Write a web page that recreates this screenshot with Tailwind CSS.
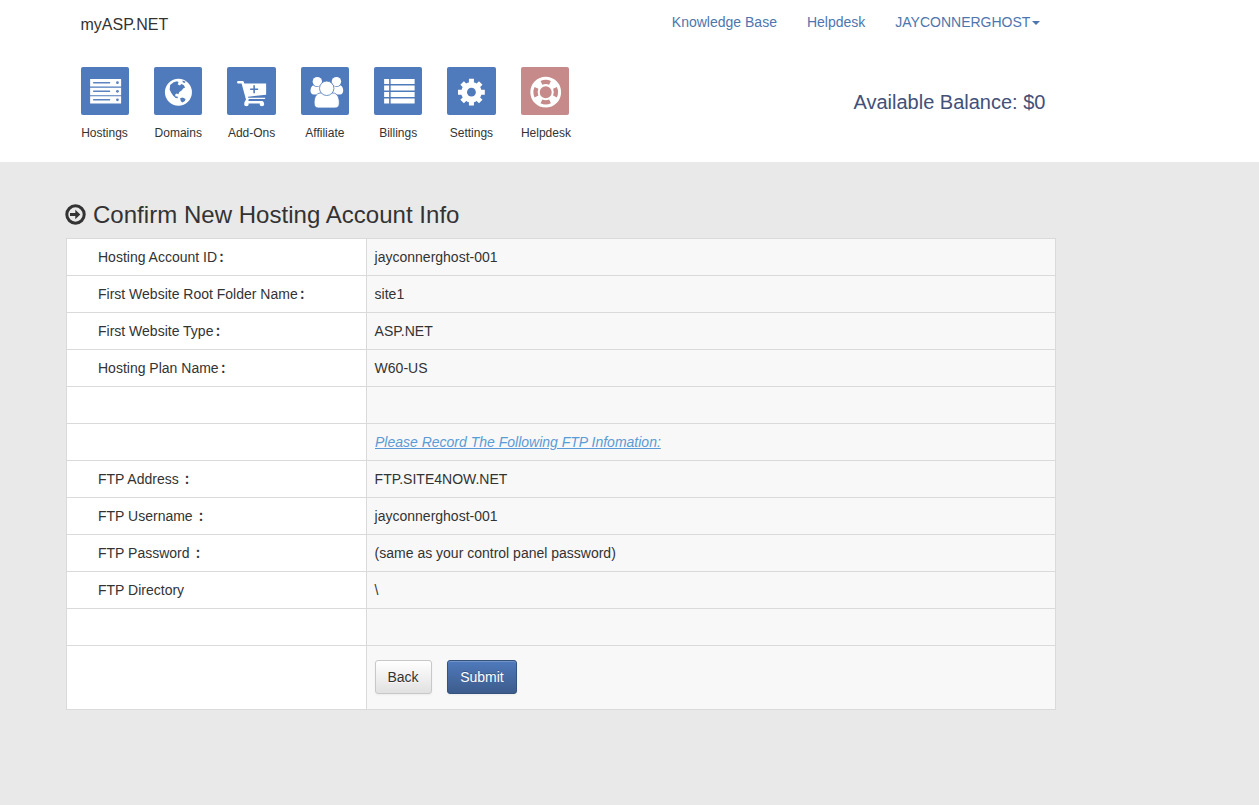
<!DOCTYPE html>
<html lang="en">
<head>
<meta charset="utf-8">
<title>Confirm New Hosting Account Info</title>
<script src="https://cdn.jsdelivr.net/npm/@tailwindcss/browser@4"></script>
</head>
<body class="min-h-screen overflow-hidden bg-[#e9e9e9] font-['Liberation_Sans','Noto_Sans_CJK_SC',sans-serif] text-sm leading-5 text-[#333]">
<header class="h-[162px] bg-white pl-[80.9px]">
  <div class="flex w-[959px] items-start justify-between pt-3">
    <a class="-ml-[0.4px] pt-[3px] text-base leading-5">myASP.NET</a>
    <nav class="flex h-[22px] gap-[30px] text-[#4d76ae]">
      <a>Knowledge Base</a>
      <a>Helpdesk</a>
      <a class="flex h-5 items-center">JAYCONNERGHOST<span class="mt-0.5 ml-[1.5px] h-0 w-0 border-x-4 border-t-4 border-x-transparent border-t-[#4d76ae]"></span></a>
    </nav>
  </div>
  <div class="flex w-[964.6px] items-start justify-between pt-8">
    <ul class="flex gap-[25.04px] text-xs leading-4">
      <li class="flex w-[48.25px] flex-col items-center gap-[10px]">
        <svg class="h-12 w-full shrink-0 rounded-xs bg-[#4f7abc]" viewBox="0 0 48 48"><path fill="#fff" d="M9 12h31v7.500H9zM9 20.700h31v7.500H9zM9 29.200h31v7.300H9z"/><g fill="#5c84c0"><path d="M12 15h17v1.500H12zM12 23.600h17v1.500H12zM12 32.100h17v1.500H12z"/><circle cx="36.300" cy="15.700" r="1.400"/><circle cx="36.300" cy="24.300" r="1.400"/><circle cx="36.300" cy="32.800" r="1.400"/></g></svg>
        <span class="-ml-px">Hostings</span>
      </li>
      <li class="flex w-[48.25px] flex-col items-center gap-[10px]">
        <svg class="h-12 w-full shrink-0 rounded-xs bg-[#4f7abc]" viewBox="0 0 48 48"><circle cx="24.300" cy="25.300" r="13.500" fill="#fff"/><path fill="#4f7abc" d="M16 18l3.500-2.800 3.500-1 1.500 1.300-1 1.700 2.200 1.400 1.500-1.500 2.300 1 1.500 2.300-2 1.200-1.500 2-2.300 1.400-1 2.200-1.800-.7-1.500 1.200.5 1.700 2 .2.300 1.700-2.200-.4-2.600-2.400-2-3-1.400-3 .4-3zM26 31.200l2.500-.8 3 1.500-1 2.400-2.300 1.200-1.500-1.300zM28.500 13.500l3 1.200-1 1.300-2-.8z"/></svg>
        <span>Domains</span>
      </li>
      <li class="flex w-[48.25px] flex-col items-center gap-[10px]">
        <svg class="h-12 w-full shrink-0 rounded-xs bg-[#4f7abc]" viewBox="0 0 48 48"><path d="M11.200 15.300H15.500L20.300 32.800 18.800 35.200H35" fill="none" stroke="#fff" stroke-width="2.600" stroke-linecap="round" stroke-linejoin="round"/><path d="M16 16.500h23v11.200l-19.800 2.200z" fill="#fff"/><path d="M20 30.800h18v1.200H20z" fill="#fff"/><circle cx="19.300" cy="37" r="2.300" fill="#fff"/><circle cx="34.800" cy="37" r="2.300" fill="#fff"/><path d="M27 18.200v8M23 22.200h8" stroke="#4f7abc" stroke-width="1.600"/></svg>
        <span>Add-Ons</span>
      </li>
      <li class="flex w-[48.25px] flex-col items-center gap-[10px]">
        <svg class="h-12 w-full shrink-0 rounded-xs bg-[#4f7abc]" viewBox="0 0 48 48"><g fill="#fff"><circle cx="16.200" cy="14.600" r="4.700"/><circle cx="35.300" cy="14.600" r="4.700"/><path d="M12 18.300c2 2 5 2 7 .8l1 8.400h-7.500C8.300 27.500 8.500 20.500 12 18.300zM39.500 18.300c-2 2-5 2-7 .8l-1 8.400H39c4.200 0 4-7 .5-9.200z"/></g><g fill="#fff" stroke="#4f7abc" stroke-width=".8"><path d="M19.500 26c-5 0-6.500 5.500-6.500 10 0 3.500 1.500 5 4.500 5h16.200c3 0 4.500-1.500 4.500-5 0-4.500-1.500-10-6.500-10z"/><circle cx="25.600" cy="21.300" r="7.200"/></g></svg>
        <span>Affiliate</span>
      </li>
      <li class="flex w-[48.25px] flex-col items-center gap-[10px]">
        <svg class="h-12 w-full shrink-0 rounded-xs bg-[#4f7abc]" viewBox="0 0 48 48"><path fill="#fff" d="M10 12h5v5h-5zM16.500 12h24v5h-24zM10 18.600h5v5h-5zM16.500 18.600h24v5h-24zM10 25.100h5v5h-5zM16.500 25.100h24v5h-24zM10 31.600h5v5h-5zM16.500 31.600h24v5h-24z"/></svg>
        <span>Billings</span>
      </li>
      <li class="flex w-[48.25px] flex-col items-center gap-[10px]">
        <svg class="h-12 w-full shrink-0 rounded-xs bg-[#4f7abc]" viewBox="0 0 48 48"><g transform="translate(24.300 25.200)"><path d="M0-13.400V13.400M-13.400 0H13.400M-9.300-9.300L9.300 9.300M9.300-9.300L-9.300 9.300" stroke="#fff" stroke-width="5"/><circle r="10.300" fill="#fff"/><circle r="4.400" fill="#4f7abc"/></g></svg>
        <span>Settings</span>
      </li>
      <li class="flex w-[48.25px] flex-col items-center gap-[10px]">
        <svg class="h-12 w-full shrink-0 rounded-xs bg-[#c58a89]" viewBox="0 0 48 48"><g transform="translate(24.600 25.200)" fill="none"><circle r="10.700" stroke="#fff" stroke-width="9.400"/><g stroke="#c58a89" stroke-width="4.200"><path d="M-4.300-9.250A10.200 10.200 0 0 1 4.300-9.250M-4.300 9.250A10.200 10.200 0 0 0 4.300 9.250M-9.250-4.300A10.200 10.200 0 0 0-9.250 4.300M9.250-4.300A10.200 10.200 0 0 1 9.250 4.300"/></g></g></svg>
        <span class="ml-[2.4px]">Helpdesk</span>
      </li>
    </ul>
    <div class="pt-[22px] text-xl leading-[26px] text-[#42507a]">Available Balance: $0</div>
  </div>
</header>
<main class="pt-[38px] pl-[66px]">
  <h1 class="flex h-[30px] items-center gap-[7px] text-2xl leading-[30px] tracking-[0.03px]">
    <svg class="-mt-px -ml-px h-[21px] w-[21px]" viewBox="0 0 21 21"><circle cx="10.500" cy="10.500" r="8.700" fill="none" stroke="#333" stroke-width="3"/><path fill="#333" d="M5 9h5.300V5.700l5 4.800-5 4.800V12H5z"/></svg>
    Confirm New Hosting Account Info
  </h1>
  <table class="mt-2 w-[990px] table-fixed border-collapse bg-white [&_i]:ml-[1.5px] [&_i]:text-xs [&_i]:leading-none [&_i]:font-bold [&_i]:not-italic [&_td]:h-[37px] [&_td]:border [&_td]:border-[#dadada] [&_td]:px-[7.6px] [&_td]:py-0 [&_td:first-child]:pl-[31px] [&_td:last-child]:bg-[#f8f8f8]">
    <colgroup><col class="w-[300px]"><col></colgroup>
    <tbody>
    <tr><td><div class="h-5">Hosting Account ID<i>&#xFF1A;</i></div></td><td>jayconnerghost-001</td></tr>
    <tr><td><div class="h-5">First Website Root Folder Name<i>&#xFF1A;</i></div></td><td>site1</td></tr>
    <tr><td><div class="h-5">First Website Type<i>&#xFF1A;</i></div></td><td>ASP.NET</td></tr>
    <tr><td><div class="h-5">Hosting Plan Name<i>&#xFF1A;</i></div></td><td>W60-US</td></tr>
    <tr><td></td><td></td></tr>
    <tr><td></td><td><span class="ml-[0.4px] text-[#5b9bd5] italic underline">Please Record The Following FTP Infomation:</span></td></tr>
    <tr><td><div class="h-5">FTP Address <i>&#xFF1A;</i></div></td><td>FTP.SITE4NOW.NET</td></tr>
    <tr><td><div class="h-5">FTP Username <i>&#xFF1A;</i></div></td><td>jayconnerghost-001</td></tr>
    <tr><td><div class="h-5">FTP Password <i>&#xFF1A;</i></div></td><td>(same as your control panel password)</td></tr>
    <tr><td>FTP Directory</td><td>\</td></tr>
    <tr><td></td><td></td></tr>
    <tr class="h-16"><td></td><td>
      <div class="mb-0.5 ml-[0.4px] flex gap-[15px]">
        <button class="h-[34px] w-[57px] rounded-[3px] border border-[#c8c8c8] bg-linear-to-b from-white to-[#e1e1e1] pr-px shadow-[0_1px_2px_rgba(0,0,0,0.05)] [text-shadow:0_1px_1px_rgba(255,255,255,0.75)]">Back</button>
        <button class="h-[34px] w-[70px] rounded-[3px] border border-[#36527e] bg-linear-to-b from-[#4f7abc] to-[#3d5c8c] text-white shadow-[inset_0_1px_0_rgba(255,255,255,0.2),0_1px_2px_rgba(0,0,0,0.05)] [text-shadow:0_-1px_0_rgba(0,0,0,0.25)]">Submit</button>
      </div>
    </td></tr>
    </tbody>
  </table>
</main>
</body>
</html>
